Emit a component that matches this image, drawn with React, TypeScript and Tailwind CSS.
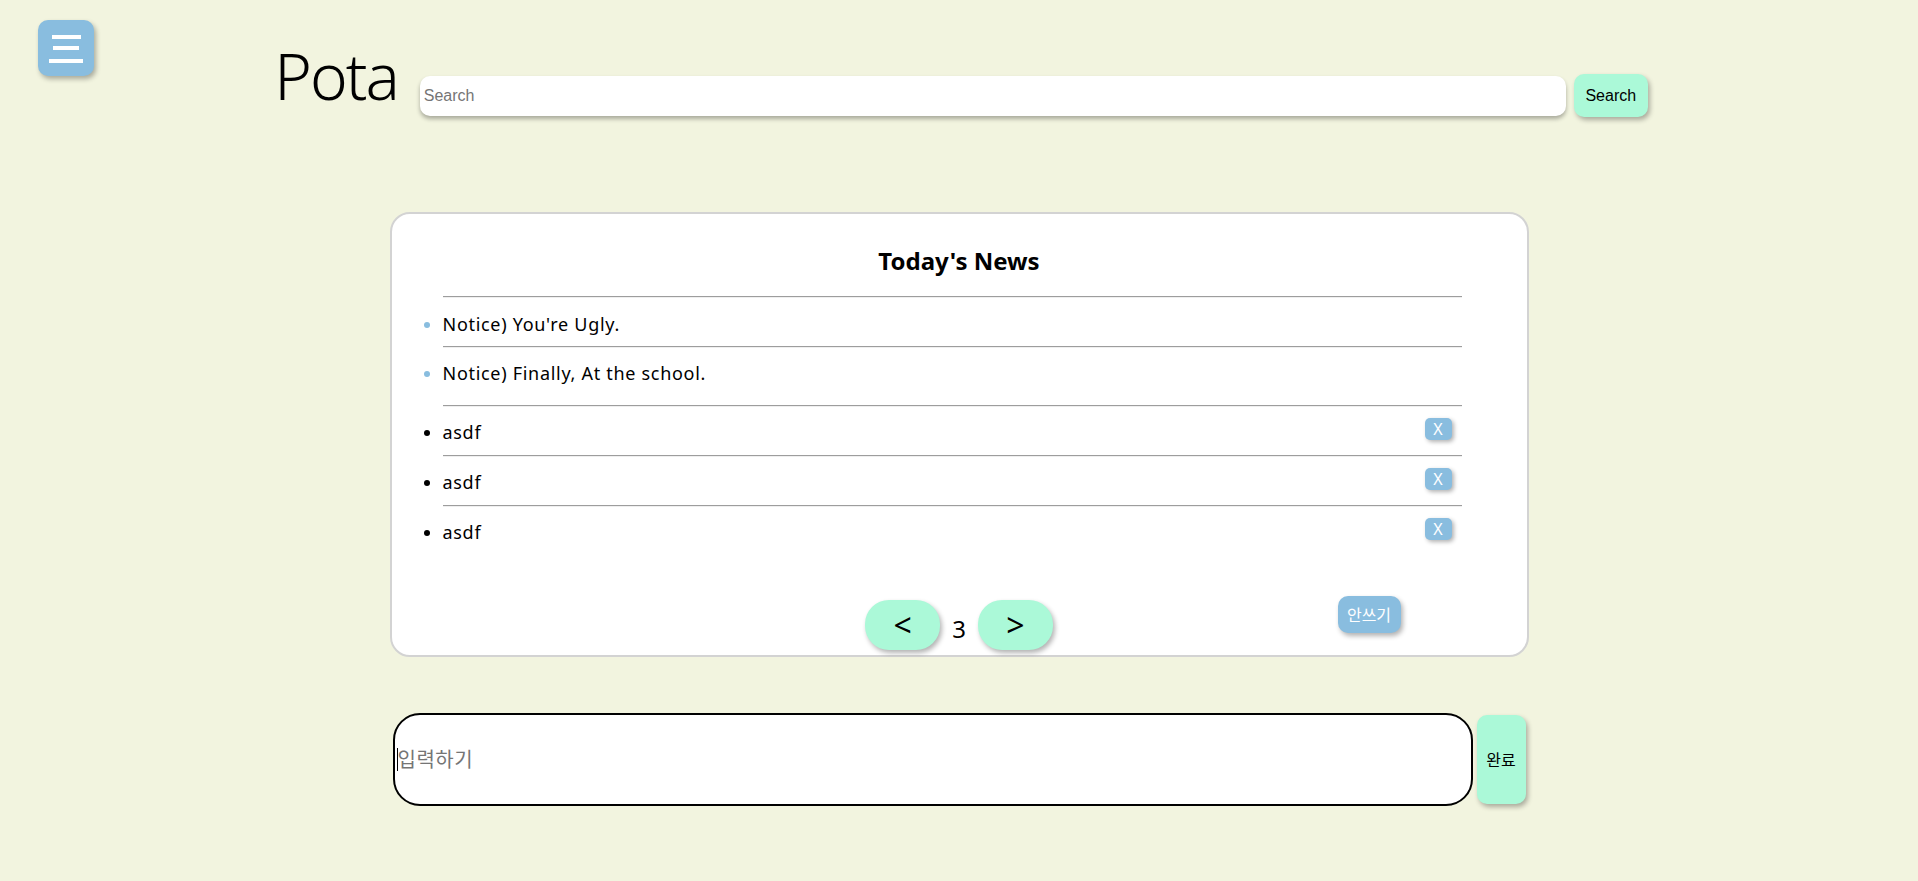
import type { FC } from "react";

const notices = ["Notice) You're Ugly.", "Notice) Finally, At the school."];
const memos = ["asdf", "asdf", "asdf"];

// hr with a dark top edge and a faint lower edge, like the browser default
const Line: FC = () => (
  <div className="h-[2px] border-t border-[#9d9d9d] border-b border-b-[#efefef]" />
);

const App: FC = () => {
  return (
    <div className="min-h-screen bg-[#f2f4df] font-['Noto_Sans','Noto_Sans_CJK_KR',sans-serif] text-black">
      {/* header */}
      <div className="grid grid-cols-[1fr_auto_1fr] items-start h-[212px] pt-[20px]">
        <button className="justify-self-start ml-[38px] w-[56px] h-[56px] rounded-[10px] bg-[#89bddf] shadow-[2px_3px_5px_rgba(0,0,0,0.3)] flex items-center justify-center">
          <svg width="56" height="56" viewBox="0 0 56 56">
            <rect x="14" y="15" width="29" height="4" fill="#fff" />
            <rect x="15" y="26" width="26" height="4" fill="#fff" />
            <rect x="11" y="39" width="34" height="4" fill="#fff" />
          </svg>
        </button>

        <div className="flex items-start ml-[4px]">
          <h1 className="mt-[24px] mr-[22px] text-[64px] leading-[64px] font-light tracking-[-2px]">
            Pota
          </h1>
          <input
            placeholder="Search"
            className="mt-[56px] w-[1146px] h-[40px] rounded-[10px] bg-white px-[4px] text-[16px] font-['Liberation_Sans',Arial,sans-serif] placeholder:text-[#757575] outline-none shadow-[0_3px_4px_rgba(0,0,0,0.3)]"
          />
          <button className="mt-[54px] ml-[8px] w-[74px] h-[43px] rounded-[10px] bg-[#abf9d8] text-[16px] font-['Liberation_Sans',Arial,sans-serif] shadow-[2px_3px_5px_rgba(0,0,0,0.3)]">
            Search
          </button>
        </div>
        <div />
      </div>

      {/* news card */}
      <div className="mx-auto w-[1139px] h-[445px] rounded-[20px] border-2 border-[#d3d3d3] bg-white pt-[31px]">
        <h2 className="text-center text-[24px] leading-[32px] font-bold">Today's News</h2>

        <ul className="mt-[19px] ml-[51px] mr-[65px] text-[18px] leading-[24px] tracking-[0.7px]">
          <Line />
          <li className="h-[48px] pt-[14px] list-disc marker:text-[#89bddf]">{notices[0]}</li>
          <Line />
          <li className="h-[57px] pt-[13px] list-disc marker:text-[#89bddf]">{notices[1]}</li>
          {memos.map((m, i) => (
            <div key={i}>
              <Line />
              <li className="h-[48px] list-disc">
                <div className="flex justify-between items-start">
                  <span className="pt-[13px]">{m}</span>
                  <button className="mt-[11px] mr-[10px] w-[27px] h-[22px] rounded-[5px] bg-[#89bddf] text-white text-[16px] leading-[22px] tracking-normal shadow-[2px_2px_4px_rgba(0,0,0,0.3)]">
                    X
                  </button>
                </div>
              </li>
            </div>
          ))}
        </ul>

        {/* pagination */}
        <div className="grid grid-cols-[1fr_auto_1fr] items-start mt-[41px]">
          <div />
          <div className="flex items-center mt-[4px]">
            <button className="w-[75px] h-[50px] rounded-[24px] bg-[#abf9d8] text-[32px] leading-none shadow-[2px_3px_5px_rgba(0,0,0,0.3)]">
              &lt;
            </button>
            <span className="mx-[12px] mt-[8px] text-[24px]">3</span>
            <button className="w-[75px] h-[50px] rounded-[24px] bg-[#abf9d8] text-[32px] leading-none shadow-[2px_3px_5px_rgba(0,0,0,0.3)]">
              &gt;
            </button>
          </div>
          <button className="justify-self-end mr-[126px] w-[63px] h-[37px] rounded-[10px] bg-[#89bddf] text-white text-[16px] shadow-[2px_3px_5px_rgba(0,0,0,0.3)]">
            안쓰기
          </button>
        </div>
      </div>

      {/* write box */}
      <div className="flex justify-center items-start gap-[4px] mt-[56px]">
        <div className="relative">
          <input
            placeholder="입력하기"
            className="w-[1080px] h-[93px] rounded-[27px] border-2 border-black bg-white px-[3px] text-[20px] tracking-[0.5px] placeholder:text-[#757575] outline-none"
          />
          <span className="absolute left-[4px] top-[35px] w-px h-[23px] bg-black" />
        </div>
        <button className="mt-[2px] w-[49px] h-[89px] rounded-[10px] bg-[#abf9d8] text-[16px] shadow-[2px_3px_5px_rgba(0,0,0,0.3)]">
          완료
        </button>
      </div>
    </div>
  );
};

export default App;
